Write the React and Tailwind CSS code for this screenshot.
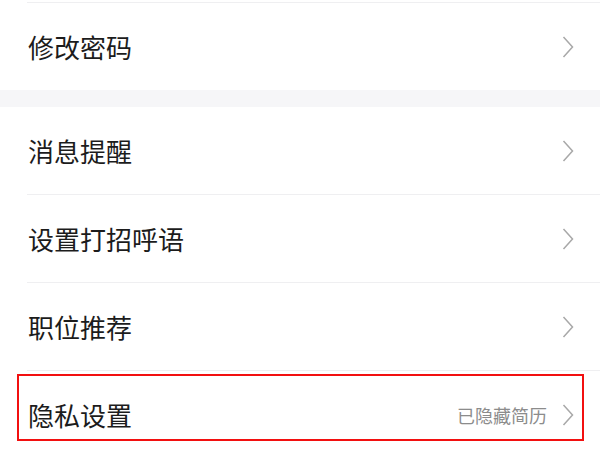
import React from "react";

function Chevron() {
    return (
        <svg width="12" height="22" viewBox="0 0 12 22" fill="none" className="shrink-0">
            <path d="M1.5 1 L10.5 11 L1.5 21" stroke="#a8a8a8" strokeWidth="1.5" strokeLinejoin="miter" />
        </svg>
    );
}

function Row({ label, extra, divider = true, children }) {
    return (
        <div className="relative bg-white">
            <div className="flex h-[87px] items-center pl-[28px] pr-[26px]">
                <span className="flex-1 text-[26px] leading-none text-[#1c1c1c]">{label}</span>
                {extra && <span className="mr-[15px] text-[18px] leading-none text-[#8c8c8c]">{extra}</span>}
                <Chevron />
            </div>
            {divider && <div className="ml-[27px] h-px bg-[#efeff1]" />}
            {children}
        </div>
    );
}

export default function App() {
    return (
        <div
            className="h-[450px] w-[600px] overflow-hidden bg-white"
            style={{ fontFamily: '"Noto Sans CJK SC", "Noto Sans", sans-serif' }}
        >
            <div className="h-[2px] bg-white" />
            <div className="ml-[27px] h-px bg-[#efeff1]" />
            <Row label="修改密码" divider={false} />
            <div className="h-[17px] bg-[#f6f6f8]" />
            <Row label="消息提醒" />
            <Row label="设置打招呼语" />
            <Row label="职位推荐" />
            <Row label="隐私设置" extra="已隐藏简历" divider={false}>
                <div className="absolute left-[17px] right-[16px] top-[3px] h-[67px] border-2 border-[#f21010]" />
            </Row>
        </div>
    );
}
